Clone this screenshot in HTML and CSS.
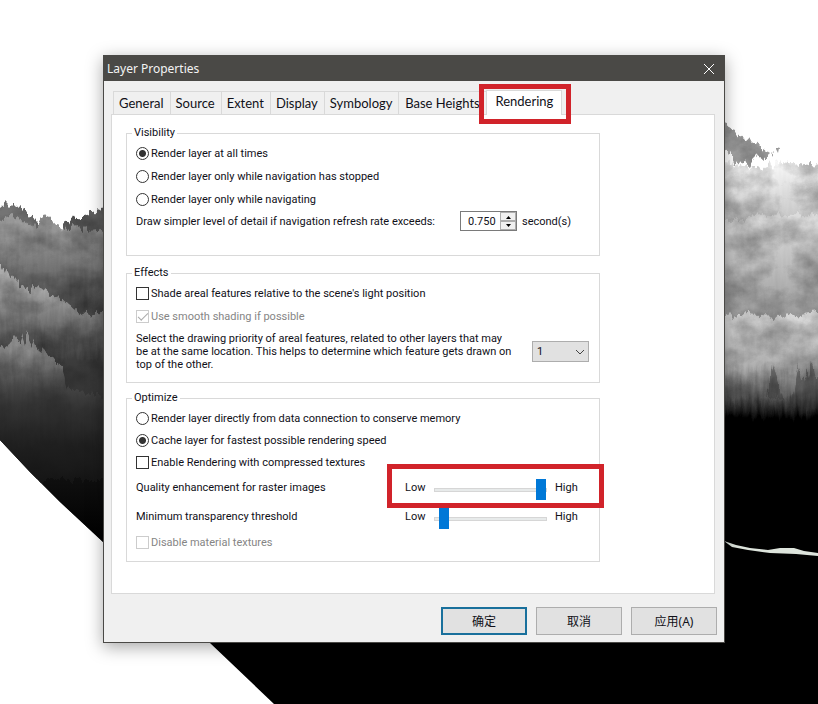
FILE: index.html
```html
<!DOCTYPE html>
<html lang="en">
<head>
    <meta charset="UTF-8">
    <meta name="viewport" content="width=device-width, initial-scale=1.0">
    <title>Layer Properties</title>
    <link rel="stylesheet" href="styles.css">
</head>
<body>
    <!-- Terrain scene behind the dialog -->
    <svg class="scene" viewBox="0 0 818 704" preserveAspectRatio="xMidYMid slice" aria-hidden="true">
        <defs>
            <filter id="rough" x="-5%" y="-10%" width="110%" height="120%" color-interpolation-filters="sRGB">
                <feTurbulence type="fractalNoise" baseFrequency="0.25 0.03" numOctaves="3" seed="4" result="spikes"/>
                <feDisplacementMap in="SourceGraphic" in2="spikes" scale="14" xChannelSelector="A" yChannelSelector="G" result="shape"/>
                <feTurbulence type="fractalNoise" baseFrequency="0.03 0.04" numOctaves="6" seed="9"/>
                <feColorMatrix values="0 0 0 0 0  0 0 0 0 0  0 0 0 0 0  0.6 0 0 0 -0.2"/>
                <feComposite operator="in" in2="shape" result="grain"/>
                <feMerge>
                    <feMergeNode in="shape"/>
                    <feMergeNode in="grain"/>
                </feMerge>
            </filter>
            <linearGradient id="back" x1="0" y1="200" x2="0" y2="310" gradientUnits="userSpaceOnUse">
                <stop offset="0" stop-color="#b8b8b8"/>
                <stop offset="1" stop-color="#484848"/>
            </linearGradient>
            <linearGradient id="middle" x1="0" y1="260" x2="0" y2="360" gradientUnits="userSpaceOnUse">
                <stop offset="0" stop-color="#d0d0d0"/>
                <stop offset="1" stop-color="#3c3c3c"/>
            </linearGradient>
            <linearGradient id="front" x1="0" y1="325" x2="0" y2="445" gradientUnits="userSpaceOnUse">
                <stop offset="0" stop-color="#b4b4b4"/>
                <stop offset="0.5" stop-color="#565656"/>
                <stop offset="1" stop-color="#1c1c1c"/>
            </linearGradient>
            <linearGradient id="haze" x1="0" y1="155" x2="0" y2="220" gradientUnits="userSpaceOnUse">
                <stop offset="0" stop-color="#fff"/>
                <stop offset="1" stop-color="#c4c4c4"/>
            </linearGradient>
            <linearGradient id="slope" x1="0" y1="220" x2="0" y2="315" gradientUnits="userSpaceOnUse">
                <stop offset="0" stop-color="#dcdcdc"/>
                <stop offset="1" stop-color="#9a9a9a"/>
            </linearGradient>
            <linearGradient id="curtain" x1="0" y1="310" x2="0" y2="418" gradientUnits="userSpaceOnUse">
                <stop offset="0" stop-color="#dcdcdc"/>
                <stop offset="0.5" stop-color="#b0b0b0"/>
                <stop offset="0.8" stop-color="#5c5c5c"/>
                <stop offset="1" stop-color="#000"/>
            </linearGradient>
            <linearGradient id="ground" x1="0" y1="360" x2="0" y2="540" gradientUnits="userSpaceOnUse">
                <stop offset="0" stop-color="#2c2c2c" stop-opacity="0"/>
                <stop offset="0.3" stop-color="#2c2c2c"/>
                <stop offset="1" stop-color="#000"/>
            </linearGradient>
            <clipPath id="edge">
                <path d="M0 0H818V704H274L210 643L103 542L60 502L30 472L0 440Z"/>
            </clipPath>
        </defs>
        <g clip-path="url(#edge)">
            <path fill="#000" d="M0 400H818V704H0Z"/>
            <g filter="url(#rough)">
                <path fill="#606060" d="M62 224L80 216L94 212L108 204L130 200V260H62Z"/>
                <path fill="#747474" d="M-20 212L0 209L8 202L14 208L24 207L32 216L40 222V260H-20Z"/>
                <path fill="url(#back)" d="M-20 225L0 222L12 216L22 220L34 226L44 216L48 215L56 224L66 231L76 224L86 231L100 230L130 238V360H-20Z"/>
                <path fill="url(#middle)" d="M-20 270L0 262L8 278L14 275L20 286L30 290L40 286L50 295L62 299L74 309L84 314L102 312L130 310V400H-20Z"/>
                <path fill="url(#front)" d="M-20 360L0 350L10 342L16 336L22 346L27 331L34 344L44 352L52 358L60 364L68 390L103 396L130 400V480H-20Z"/>
            </g>
            <path fill="url(#ground)" d="M0 360H103V550H0Z" opacity="0.7"/>
            <g filter="url(#rough)">
                <path fill="url(#haze)" d="M700 146L732 165L765 168L780 162L840 168V250H700Z"/>
                <path fill="#aaa" d="M700 115L726 126L745 139L766 149L772 153L764 160L756 156L750 166L742 162L734 164L726 150L700 145Z"/>
                <path fill="#aaa" d="M775 149L779 150L778 155Z"/>
                <path fill="url(#slope)" d="M700 226L750 218L800 214L840 218V320H700Z"/>
                <path fill="url(#slope)" opacity="0.6" d="M700 262L740 254L775 249L796 260L840 280V320H700Z"/>
                <path fill="url(#curtain)" d="M700 322L740 314L780 316L840 310V418H700Z"/>
            </g>
            <g fill="#333" opacity="0.4" filter="url(#rough)">
                <path d="M768 398L772 364L778 382L784 400ZM790 404L798 366L804 384L812 362L820 406Z"/>
            </g>
        </g>
        <path fill="#dde4dc" d="M724 541L736 545L750 548L768 550L780 548L794 548L804 551L818 553V556L796 554L770 553L748 550L732 547Z"/>
    </svg>

    <main class="desktop">
        <form class="dialog">
            <header class="title-bar">
                <h1>Layer Properties</h1>
                <button type="button" class="close-btn" aria-label="Close">
                    <svg width="12" height="12" viewBox="0 0 12 12"><path d="M1 1L11 11M11 1L1 11"/></svg>
                </button>
            </header>

            <nav class="tabs">
                <button type="button">General</button>
                <button type="button">Source</button>
                <button type="button">Extent</button>
                <button type="button">Display</button>
                <button type="button">Symbology</button>
                <button type="button" class="wide">Base Heights</button>
                <button type="button" class="active">Rendering</button>
            </nav>

            <section class="panel">
                <fieldset class="visibility">
                    <legend>Visibility</legend>
                    <label class="option"><input type="radio" name="visibility" checked>Render layer at all times</label>
                    <label class="option"><input type="radio" name="visibility">Render layer only while navigation has stopped</label>
                    <label class="option"><input type="radio" name="visibility">Render layer only while navigating</label>
                    <div class="refresh-row">
                        <label for="refreshRate">Draw simpler level of detail if navigation refresh rate exceeds:</label>
                        <div class="spinner">
                            <input type="text" id="refreshRate" value="0.750">
                            <div class="spin-buttons">
                                <button type="button" aria-label="Increase"><svg width="7" height="4" viewBox="0 0 7 4"><path d="M1 4L3.500 1L6 4Z"/></svg></button>
                                <button type="button" aria-label="Decrease"><svg width="7" height="4" viewBox="0 0 7 4"><path d="M1 0L3.500 3L6 0Z"/></svg></button>
                            </div>
                        </div>
                        <span>second(s)</span>
                    </div>
                </fieldset>

                <fieldset class="effects">
                    <legend>Effects</legend>
                    <label class="option"><input type="checkbox">Shade areal features relative to the scene's light position</label>
                    <label class="option disabled"><input type="checkbox" checked disabled>Use smooth shading if possible</label>
                    <div class="priority-row">
                        <label for="priority">Select the drawing priority of areal features, related to other layers that may<br>be at the same location. This helps to determine which feature gets drawn on<br>top of the other.</label>
                        <div class="dropdown">
                            <select id="priority">
                                <option>1</option>
                                <option>2</option>
                                <option>3</option>
                            </select>
                            <svg width="10" height="6" viewBox="0 0 10 6"><path d="M1 1L5 5L9 1"/></svg>
                        </div>
                    </div>
                </fieldset>

                <fieldset class="optimize">
                    <legend>Optimize</legend>
                    <label class="option"><input type="radio" name="optimize">Render layer directly from data connection to conserve memory</label>
                    <label class="option"><input type="radio" name="optimize" checked>Cache layer for fastest possible rendering speed</label>
                    <label class="option"><input type="checkbox">Enable Rendering with compressed textures</label>
                    <div class="slider-row">
                        <label for="quality">Quality enhancement for raster images</label>
                        <div class="slider marked">
                            <span>Low</span>
                            <input type="range" id="quality" min="0" max="100" value="100">
                            <span>High</span>
                        </div>
                    </div>
                    <div class="slider-row">
                        <label for="threshold">Minimum transparency threshold</label>
                        <div class="slider">
                            <span>Low</span>
                            <input type="range" id="threshold" min="0" max="100" value="4">
                            <span>High</span>
                        </div>
                    </div>
                    <label class="option disabled"><input type="checkbox" disabled>Disable material textures</label>
                </fieldset>
            </section>

            <footer class="actions">
                <button type="button" class="default">确定</button>
                <button type="button">取消</button>
                <button type="button">应用(A)</button>
            </footer>
        </form>
    </main>
</body>
</html>
```
FILE: styles.css
```css
/* General Styles */
* {
    box-sizing: border-box;
}

body {
    margin: 0;
    background: #fff;
    color: #101018;
    font-family: Roboto, sans-serif;
    font-size: 11px;
    line-height: 13px;
}

button,
input,
select {
    margin: 0;
    padding: 0;
    font: inherit;
    color: inherit;
}

.scene {
    position: absolute;
    top: 0;
    left: 0;
    width: 100%;
    height: 100%;
}

.desktop {
    position: relative;
    padding: 55px 93px 61px 103px;
}

/* Dialog */
.dialog {
    background: #f0f0f0;
    border: 1px solid #4a4946;
    box-shadow: 0 4px 16px rgba(0, 0, 0, 0.35);
}

.title-bar {
    display: flex;
    justify-content: space-between;
    align-items: center;
    height: 25px;
    padding: 0 9px 0 3px;
    background: #4a4946;
    color: #f4f4f4;
}

.title-bar h1 {
    margin: 0;
    font-family: "Noto Sans", sans-serif;
    font-size: 12px;
    font-weight: normal;
}

.close-btn {
    display: flex;
    border: none;
    background: none;
}

.close-btn svg {
    fill: none;
    stroke: #fff;
}

/* Tabs */
.tabs {
    display: flex;
    align-items: flex-end;
    height: 33px;
    padding: 0 9px;
}

.tabs button {
    height: 23px;
    padding: 0 6px 0 5px;
    background: #f0f0f0;
    border: 1px solid #d9d9d9;
    border-right: none;
    border-bottom: none;
    font-family: Lato, sans-serif;
    font-size: 13px;
    white-space: nowrap;
}

.tabs .wide {
    width: 88px;
}

.tabs .active {
    position: relative;
    height: 25px;
    margin-bottom: -1px;
    padding: 0 8px 3px;
    background: #fff;
    border-right: 1px solid #d9d9d9;
}

/* Red call-out boxes */
.tabs .active::after,
.marked::after {
    content: "";
    position: absolute;
    border: 5px solid #d1232a;
    pointer-events: none;
}

.tabs .active::after {
    inset: -7px -10px -9px -8px;
}

.marked::after {
    inset: -9px -26px -6px -18px;
    z-index: 1;
}

/* Panel */
.panel {
    margin: 0 9px 0 7px;
    padding: 11px 114px 31px 14px;
    background: #fff;
    border: 1px solid #d9d9d9;
}

fieldset {
    min-width: 0;
    margin: 0;
    padding: 2px 10px 24px 9px;
    border: 1px solid #d9d9d9;
}

legend {
    margin-left: -4px;
    padding: 0 2px;
    line-height: 14px;
}

.effects {
    margin-top: 10px;
    padding-bottom: 11px;
}

.optimize {
    margin-top: 8px;
    padding-bottom: 8px;
}

.option {
    display: flex;
    align-items: center;
    gap: 2px;
    height: 23px;
}

.optimize .option {
    height: 22px;
}

.disabled {
    color: #858585;
}

/* Radio buttons and tick boxes */
.option input {
    appearance: none;
    width: 13px;
    height: 13px;
    background: #fff;
    border: 1px solid #333;
}

.option input[type="radio"] {
    border-radius: 50%;
}

.option input[type="radio"]:checked {
    background: radial-gradient(circle, #333 3px, #fff 4px);
}

.option input:disabled {
    border-color: #ccc;
}

.option input[type="checkbox"]:checked {
    display: grid;
    place-items: center;
}

.option input[type="checkbox"]:checked::before {
    content: "";
    width: 9px;
    height: 4px;
    margin-bottom: 3px;
    border: solid #aaa;
    border-width: 0 0 1px 1px;
    transform: rotate(-45deg);
}

/* Refresh rate */
.refresh-row {
    display: flex;
    align-items: center;
    height: 20px;
}

.refresh-row label {
    width: 324px;
}

.spinner {
    display: flex;
    width: 57px;
    height: 20px;
    margin-right: 5px;
    border: 1px solid #7a7a7a;
}

.spinner input {
    width: 39px;
    padding-left: 7px;
    border: none;
    outline: none;
}

.spin-buttons {
    display: flex;
    flex-direction: column;
    flex-grow: 1;
}

.spin-buttons button {
    display: flex;
    flex: 1;
    align-items: center;
    justify-content: center;
    background: #f0f0f0;
    border: 1px solid #adadad;
}

/* Drawing priority */
.priority-row {
    display: flex;
    align-items: center;
    justify-content: space-between;
    margin-top: 4px;
    white-space: nowrap;
}

.dropdown {
    position: relative;
}

.dropdown select {
    display: block;
    appearance: none;
    width: 57px;
    height: 21px;
    padding-left: 4px;
    background: #e1e1e1;
    border: 1px solid #adadad;
    border-radius: 0;
}

.dropdown svg {
    position: absolute;
    top: 8px;
    right: 4px;
    fill: none;
    stroke: #444;
    pointer-events: none;
}

/* Sliders */
.slider-row {
    display: flex;
    align-items: center;
    height: 29px;
}

.slider-row label {
    width: 269px;
}

.slider {
    display: flex;
    align-items: center;
    position: relative;
    height: 29px;
}

.slider span:first-child {
    width: 29px;
}

.slider input {
    appearance: none;
    width: 113px;
    height: 21px;
    margin: 4px 8px 0 0;
    background: none;
}

.slider input::-webkit-slider-runnable-track {
    height: 4px;
    background: #e7eaea;
    border: 1px solid #d6d6d6;
}

.slider input::-webkit-slider-thumb {
    appearance: none;
    width: 10px;
    height: 21px;
    margin-top: -10px;
    background: #0078d7;
}

/* Dialog buttons */
.actions {
    display: flex;
    justify-content: flex-end;
    gap: 9px;
    padding: 13px 7px 7px;
}

.actions button {
    width: 86px;
    height: 28px;
    background: #e1e1e1;
    border: 1px solid #adadad;
    font-family: "Noto Sans", "Noto Sans CJK SC", sans-serif;
    font-size: 12px;
}

.actions .default {
    border: 2px solid #19709c;
}
```
